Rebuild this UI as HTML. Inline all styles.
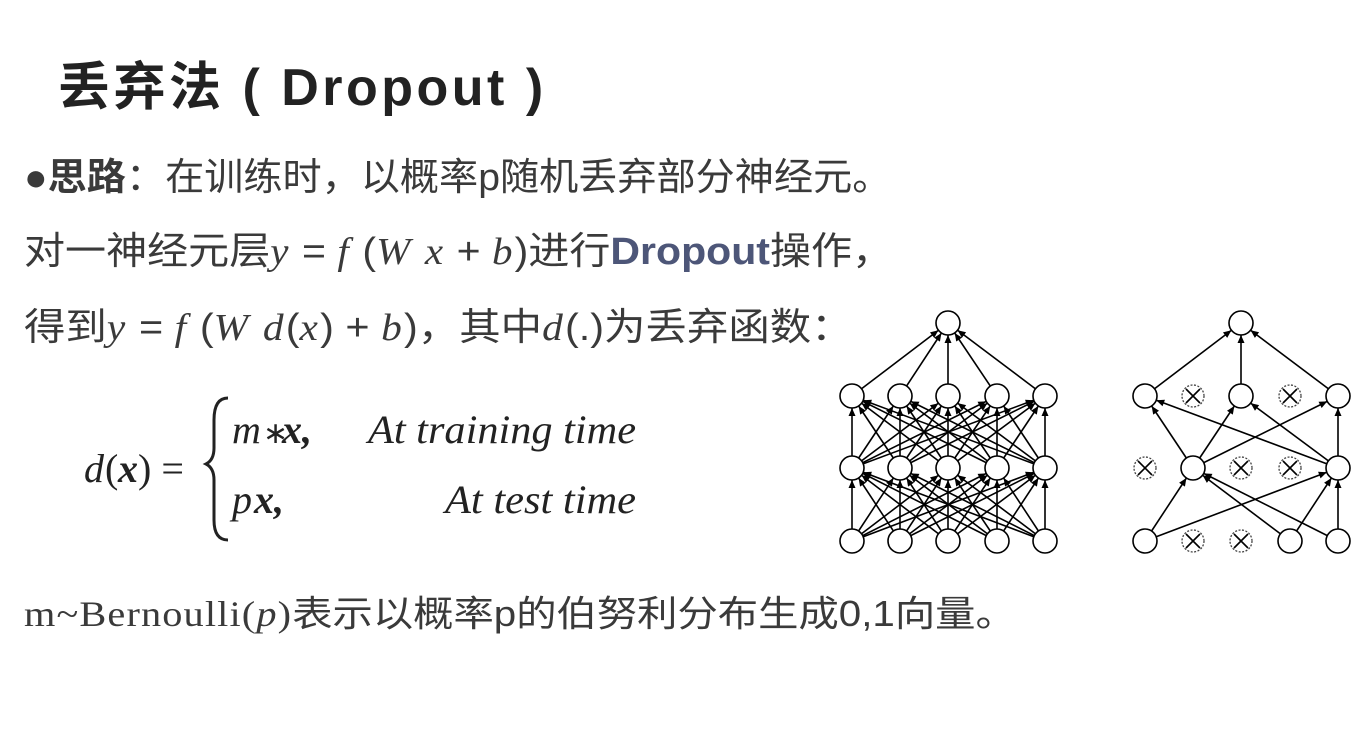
<!DOCTYPE html>
<html><head><meta charset="utf-8"><style>
html,body{margin:0;padding:0;background:#fff;}
body{width:1357px;height:733px;position:relative;overflow:hidden;font-family:"Liberation Sans","Noto Sans CJK SC",sans-serif;color:#3a3a3a;}
.t{position:absolute;white-space:nowrap;transform-origin:left top;}
.m{font-family:"Liberation Serif","DejaVu Serif",serif;font-style:italic;letter-spacing:2px;}
</style></head><body>
<div class="t" style="left:58px;top:45px;font-size:52px;font-weight:bold;color:#222;letter-spacing:3.5px;">丢弃法 ( Dropout )</div>
<div class="t" style="left:24px;top:146px;font-size:38px;transform:scaleX(1.03);">●<b>思路</b>：在训练时，以概率p随机丢弃部分神经元。</div>
<div class="t" style="left:24px;top:220px;font-size:38px;transform:scaleX(1.08);">对一神经元层<span class="m">y</span> = <span class="m">f</span> (<span class="m">W x</span> + <span class="m">b</span>)进行<b style="color:#4d5678">Dropout</b>操作，</div>
<div class="t" style="left:24px;top:296px;font-size:38px;transform:scaleX(1.09);">得到<span class="m">y</span> = <span class="m">f</span> (<span class="m">W d</span>(<span class="m">x</span>) + <span class="m">b</span>)，其中<span class="m">d</span>(.)为丢弃函数：</div>
<div class="t" style="left:24px;top:585px;font-size:36px;transform:scaleX(1.12);"><span style="font-family:'Liberation Serif',serif;letter-spacing:1px">m~Bernoulli(<i>p</i>)</span>表示以概率p的伯努利分布生成0,1向量。</div>

<svg style="position:absolute;left:60px;top:380px" width="600" height="165">
<g font-family="Liberation Serif,serif" font-size="40" fill="#222">
<text x="24" y="102" font-style="italic">d</text><text x="45" y="102">(</text><text x="58" y="102" font-weight="bold" font-style="italic">x</text><text x="78" y="102">) =</text>
<path d="M168,18 Q154,18 154,40 L154,68 Q154,80 146,84 Q154,88 154,100 L154,140 Q154,160 168,160" fill="none" stroke="#222" stroke-width="3"/>
<text x="172" y="63" font-style="italic">m</text><text x="203" y="63" font-size="30">∗</text><text x="222" y="63" font-weight="bold" font-style="italic">x,</text>
<text x="308" y="63" font-style="italic" textLength="268" lengthAdjust="spacingAndGlyphs">At training time</text>
<text x="172" y="133" font-style="italic">p</text><text x="194" y="133" font-weight="bold" font-style="italic">x,</text>
<text x="385" y="133" font-style="italic" textLength="191" lengthAdjust="spacingAndGlyphs">At test time</text>
</g></svg>

<svg style="position:absolute;left:0;top:0" width="1357" height="733">
<defs><marker id="a" markerUnits="userSpaceOnUse" viewBox="-22 -4 22 8" refX="0" refY="0" markerWidth="22" markerHeight="8" orient="auto"><path d="M-12,0 L-20,-3.5 L-20,3.5z" fill="#000"/></marker></defs>
<g stroke="#000" stroke-width="1.6" marker-end="url(#a)">
<line x1="852" y1="396" x2="948" y2="323"/><line x1="900" y1="396" x2="948" y2="323"/><line x1="948" y1="396" x2="948" y2="323"/><line x1="997" y1="396" x2="948" y2="323"/><line x1="1045" y1="396" x2="948" y2="323"/>
<line x1="852" y1="468" x2="852" y2="396"/><line x1="852" y1="468" x2="900" y2="396"/><line x1="852" y1="468" x2="948" y2="396"/><line x1="852" y1="468" x2="997" y2="396"/><line x1="852" y1="468" x2="1045" y2="396"/>
<line x1="900" y1="468" x2="852" y2="396"/><line x1="900" y1="468" x2="900" y2="396"/><line x1="900" y1="468" x2="948" y2="396"/><line x1="900" y1="468" x2="997" y2="396"/><line x1="900" y1="468" x2="1045" y2="396"/>
<line x1="948" y1="468" x2="852" y2="396"/><line x1="948" y1="468" x2="900" y2="396"/><line x1="948" y1="468" x2="948" y2="396"/><line x1="948" y1="468" x2="997" y2="396"/><line x1="948" y1="468" x2="1045" y2="396"/>
<line x1="997" y1="468" x2="852" y2="396"/><line x1="997" y1="468" x2="900" y2="396"/><line x1="997" y1="468" x2="948" y2="396"/><line x1="997" y1="468" x2="997" y2="396"/><line x1="997" y1="468" x2="1045" y2="396"/>
<line x1="1045" y1="468" x2="852" y2="396"/><line x1="1045" y1="468" x2="900" y2="396"/><line x1="1045" y1="468" x2="948" y2="396"/><line x1="1045" y1="468" x2="997" y2="396"/><line x1="1045" y1="468" x2="1045" y2="396"/>
<line x1="852" y1="541" x2="852" y2="468"/><line x1="852" y1="541" x2="900" y2="468"/><line x1="852" y1="541" x2="948" y2="468"/><line x1="852" y1="541" x2="997" y2="468"/><line x1="852" y1="541" x2="1045" y2="468"/>
<line x1="900" y1="541" x2="852" y2="468"/><line x1="900" y1="541" x2="900" y2="468"/><line x1="900" y1="541" x2="948" y2="468"/><line x1="900" y1="541" x2="997" y2="468"/><line x1="900" y1="541" x2="1045" y2="468"/>
<line x1="948" y1="541" x2="852" y2="468"/><line x1="948" y1="541" x2="900" y2="468"/><line x1="948" y1="541" x2="948" y2="468"/><line x1="948" y1="541" x2="997" y2="468"/><line x1="948" y1="541" x2="1045" y2="468"/>
<line x1="997" y1="541" x2="852" y2="468"/><line x1="997" y1="541" x2="900" y2="468"/><line x1="997" y1="541" x2="948" y2="468"/><line x1="997" y1="541" x2="997" y2="468"/><line x1="997" y1="541" x2="1045" y2="468"/>
<line x1="1045" y1="541" x2="852" y2="468"/><line x1="1045" y1="541" x2="900" y2="468"/><line x1="1045" y1="541" x2="948" y2="468"/><line x1="1045" y1="541" x2="997" y2="468"/><line x1="1045" y1="541" x2="1045" y2="468"/>
<line x1="1145" y1="396" x2="1241" y2="323"/><line x1="1241" y1="396" x2="1241" y2="323"/><line x1="1338" y1="396" x2="1241" y2="323"/>
<line x1="1193" y1="468" x2="1145" y2="396"/><line x1="1193" y1="468" x2="1241" y2="396"/><line x1="1193" y1="468" x2="1338" y2="396"/>
<line x1="1338" y1="468" x2="1145" y2="396"/><line x1="1338" y1="468" x2="1241" y2="396"/><line x1="1338" y1="468" x2="1338" y2="396"/>
<line x1="1145" y1="541" x2="1193" y2="468"/><line x1="1145" y1="541" x2="1338" y2="468"/><line x1="1290" y1="541" x2="1193" y2="468"/><line x1="1290" y1="541" x2="1338" y2="468"/><line x1="1338" y1="541" x2="1193" y2="468"/><line x1="1338" y1="541" x2="1338" y2="468"/>
</g>
<g fill="#fff" stroke="#000" stroke-width="1.6">
<circle cx="948" cy="323" r="12"/>
<circle cx="852" cy="396" r="12"/><circle cx="900" cy="396" r="12"/><circle cx="948" cy="396" r="12"/><circle cx="997" cy="396" r="12"/><circle cx="1045" cy="396" r="12"/>
<circle cx="852" cy="468" r="12"/><circle cx="900" cy="468" r="12"/><circle cx="948" cy="468" r="12"/><circle cx="997" cy="468" r="12"/><circle cx="1045" cy="468" r="12"/>
<circle cx="852" cy="541" r="12"/><circle cx="900" cy="541" r="12"/><circle cx="948" cy="541" r="12"/><circle cx="997" cy="541" r="12"/><circle cx="1045" cy="541" r="12"/>
<circle cx="1241" cy="323" r="12"/>
<circle cx="1145" cy="396" r="12"/><circle cx="1241" cy="396" r="12"/><circle cx="1338" cy="396" r="12"/>
<circle cx="1193" cy="468" r="12"/><circle cx="1338" cy="468" r="12"/>
<circle cx="1145" cy="541" r="12"/><circle cx="1290" cy="541" r="12"/><circle cx="1338" cy="541" r="12"/>
</g>
<g fill="#fff" stroke="#444" stroke-width="1.3">
<g stroke-dasharray="2 1.5"><circle cx="1193" cy="396" r="11"/><circle cx="1290" cy="396" r="11"/><circle cx="1145" cy="468" r="11"/><circle cx="1241" cy="468" r="11"/><circle cx="1290" cy="468" r="11"/><circle cx="1193" cy="541" r="11"/><circle cx="1241" cy="541" r="11"/></g>
<path stroke="#000" stroke-width="1.6" d="M1186,389l14,14m0,-14l-14,14 M1283,389l14,14m0,-14l-14,14 M1138,461l14,14m0,-14l-14,14 M1234,461l14,14m0,-14l-14,14 M1283,461l14,14m0,-14l-14,14 M1186,534l14,14m0,-14l-14,14 M1234,534l14,14m0,-14l-14,14"/>
</g>
</svg>
</body></html>
